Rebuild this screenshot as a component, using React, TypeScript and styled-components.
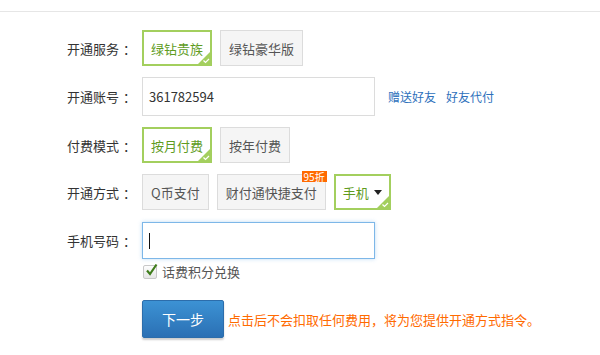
import React from "react";
import styled, { createGlobalStyle } from "styled-components";

const Global = createGlobalStyle`
  html, body { margin: 0; padding: 0; background: #fff; }
  body { font-family: "Noto Sans CJK SC", "Liberation Sans", sans-serif; }
`;

const Page = styled.div`
  width: 600px;
  height: 355px;
  overflow: hidden;
  background: #fff;
`;

const TopBar = styled.div`
  height: 11px;
  border-bottom: 1px solid #e6e6e6;
`;

const Form = styled.div`
  display: flex;
  flex-direction: column;
  padding-top: 18px;
`;

const Row = styled.div<{ $mt?: number }>`
  display: grid;
  grid-template-columns: 132px 1fr;
  column-gap: 10px;
  align-items: center;
  margin-top: ${(p) => p.$mt ?? 0}px;
`;

const Label = styled.div`
  text-align: right;
  font-size: 13px;
  color: #333;
  white-space: nowrap;
`;

const Colon = styled.span`
  display: inline-block;
  box-sizing: border-box;
  width: 13px;
  padding-left: 4px;
  text-align: left;
  white-space: nowrap;
`;

const Options = styled.div`
  display: flex;
  align-items: center;
  gap: 8px;
`;

const Opt = styled.div<{ $on?: boolean }>`
  position: relative;
  box-sizing: border-box;
  height: 36px;
  display: flex;
  align-items: center;
  gap: 5px;
  padding: 0 ${(p) => (p.$on ? 7 : 8)}px;
  border: ${(p) => (p.$on ? "2px solid #a3cf5e" : "1px solid #dcdcdc")};
  background: ${(p) => (p.$on ? "#fff" : "#f5f5f5")};
  color: ${(p) => (p.$on ? "#5f9c1f" : "#555")};
  font-size: 13px;
  white-space: nowrap;
`;

const Corner = styled.svg`
  position: absolute;
  right: -1px;
  bottom: -1px;
  width: 14px;
  height: 14px;
`;

const Badge = styled.span`
  position: absolute;
  top: -4px;
  right: -2px;
  height: 11px;
  line-height: 11px;
  padding: 0 2px;
  background: #ff6a00;
  color: #fff;
  font-size: 10px;
`;

const Caret = styled.span`
  width: 0;
  height: 0;
  border-left: 4px solid transparent;
  border-right: 4px solid transparent;
  border-top: 5px solid #222;
`;

const InputBox = styled.div<{ $focus?: boolean; $h: number }>`
  box-sizing: border-box;
  width: 233px;
  height: ${(p) => p.$h}px;
  display: flex;
  align-items: center;
  padding: 0 6px;
  border: 1px solid ${(p) => (p.$focus ? "#7db7e8" : "#dcdcdc")};
  box-shadow: ${(p) => (p.$focus ? "0 0 4px rgba(110,175,230,0.45)" : "none")};
  font-size: 13px;
  color: #333;
`;

const TextCaret = styled.span`
  display: inline-block;
  width: 1px;
  height: 16px;
  background: #111;
`;

const InputLine = styled.div`
  display: flex;
  align-items: center;
`;

const Links = styled.div`
  display: flex;
  gap: 10px;
  margin-left: 13px;
`;

const Link = styled.a`
  font-size: 12px;
  color: #2d70bb;
  text-decoration: none;
`;

const Check = styled.label`
  display: flex;
  align-items: center;
  gap: 5px;
  height: 13px;
  line-height: 13px;
  font-size: 13px;
  color: #555;
  padding-left: 1px;
`;

const CheckBox = styled.span`
  position: relative;
  display: inline-block;
  width: 12px;
  height: 12px;
  border: 1px solid #c8c8c8;
  border-radius: 2px;
  background: linear-gradient(#fdfdfd, #e6e6e6);
`;

const CheckMark = styled.svg`
  position: absolute;
  left: 1px;
  top: -3px;
  width: 13px;
  height: 14px;
`;

const Actions = styled.div`
  display: flex;
  align-items: center;
  gap: 4px;
`;

const NextButton = styled.button`
  box-sizing: border-box;
  width: 82px;
  height: 38px;
  border: 1px solid #2c6dab;
  border-radius: 2px;
  background: linear-gradient(#3c92d4, #2b70b4);
  box-shadow: 0 2px 2px rgba(0, 0, 0, 0.2);
  color: #fff;
  font-family: "Noto Sans CJK SC", sans-serif;
  font-size: 14px;
  cursor: pointer;
`;

const Tip = styled.span`
  font-size: 13px;
  color: #ff6a00;
`;

const SelectedCorner = () => (
  <Corner viewBox="0 0 14 14">
    <polygon points="14,0 14,14 0,14" fill="#a3cf5e" />
    <path d="M6.5 9.5 L8.5 11.5 L12 8" stroke="#fff" strokeWidth="1.2" fill="none" />
  </Corner>
);

const Option: React.FC<{ on?: boolean; children: React.ReactNode; badge?: string }> = ({
  on,
  children,
  badge,
}) => (
  <Opt $on={on}>
    {children}
    {badge && <Badge>{badge}</Badge>}
    {on && <SelectedCorner />}
  </Opt>
);

const FieldLabel: React.FC<{ text: string }> = ({ text }) => (
  <Label>
    {text}
    <Colon>：</Colon>
  </Label>
);

export default function App() {
  return (
    <Page>
      <Global />
      <TopBar />
      <Form>
        <Row>
          <FieldLabel text="开通服务" />
          <Options>
            <Option on>绿钻贵族</Option>
            <Option>绿钻豪华版</Option>
          </Options>
        </Row>
        <Row $mt={11}>
          <FieldLabel text="开通账号" />
          <InputLine>
            <InputBox $h={39}>361782594</InputBox>
            <Links>
              <Link href="#">赠送好友</Link>
              <Link href="#">好友代付</Link>
            </Links>
          </InputLine>
        </Row>
        <Row $mt={11}>
          <FieldLabel text="付费模式" />
          <Options>
            <Option on>按月付费</Option>
            <Option>按年付费</Option>
          </Options>
        </Row>
        <Row $mt={11}>
          <FieldLabel text="开通方式" />
          <Options>
            <Option>Q币支付</Option>
            <Option badge="95折">财付通快捷支付</Option>
            <Option on>
              手机
              <Caret />
            </Option>
          </Options>
        </Row>
        <Row $mt={12}>
          <FieldLabel text="手机号码" />
          <InputBox $focus $h={37}>
            <TextCaret />
          </InputBox>
        </Row>
        <Row $mt={6}>
          <span />
          <Check>
            <CheckBox>
              <CheckMark viewBox="0 0 13 14">
                <path d="M2 7.5 L5 11 L11.5 1.5" stroke="#3f7d1c" strokeWidth="2.2" fill="none" />
              </CheckMark>
            </CheckBox>
            话费积分兑换
          </Check>
        </Row>
        <Row $mt={22}>
          <span />
          <Actions>
            <NextButton>下一步</NextButton>
            <Tip>点击后不会扣取任何费用，将为您提供开通方式指令。</Tip>
          </Actions>
        </Row>
      </Form>
    </Page>
  );
}
